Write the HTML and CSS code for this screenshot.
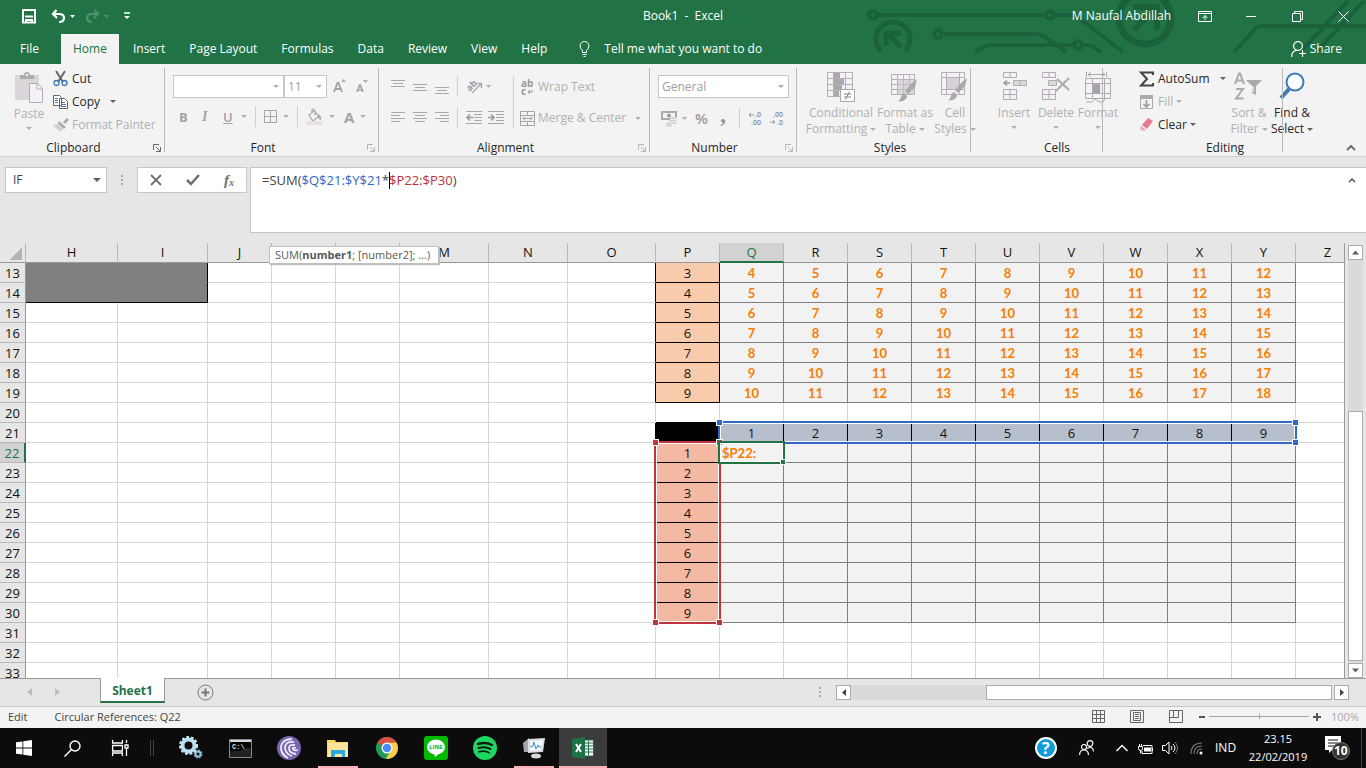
FILE: index.html
```html
<!DOCTYPE html>
<html lang="en">
<head>
<meta charset="utf-8">
<title>Book1 - Excel</title>
<link rel="stylesheet" href="styles.css">
</head>
<body>
<svg class="defs" aria-hidden="true">
  <symbol id="launch" viewBox="0 0 8 8"><path d="M.5 6V.5H6M3 3l4 4M7.500 3v4.500H3" fill="none" stroke="currentColor"/></symbol>
  <symbol id="brush" viewBox="0 0 20 24"><path d="M19 0l-2 8-7 7-3-3 7-8z" fill="#a9a9a9"/><path d="M6 14l3 3c0 4-5 6-9 5 4-2 2-6 6-8z" fill="#a9a9a9"/></symbol>
</svg>
<header class="top">
  <svg class="circuit" viewBox="0 0 526 64" fill="none" stroke="#1b613b" stroke-width="4" aria-hidden="true">
    <path d="M38 15h167M215 15h20l48 37M103 34h93q4 0 7 2l23 16M135 52l8-5q4-2 8-2h82M243 45h5q4 0 7 3l6 4M394 52l22-24q3-2 6-2h104M462 50l46-49M478 50l46-49"/>
    <circle cx="33" cy="15" r="4"/><circle cx="210" cy="15" r="4"/><circle cx="98" cy="34" r="4"/><circle cx="238" cy="45" r="4"/>
    <path d="M41 51a17 17 0 1 1 24 0" stroke-width="5"/><path d="M61 47L47 33M46 46V33h15" stroke-width="5"/>
    <circle cx="305" cy="18" r="26" stroke-width="7"/><path d="M294 30l20-20M293 7h24v23" stroke-width="6"/>
  </svg>
  <div class="titlebar">
    <div class="quick">
      <button aria-label="Save"><svg width="14" height="15" fill="none" stroke="#fff" stroke-width="2"><path d="M1 1h12v12.500H1zM3 7.500h8M4 14v-3h6v3"/></svg></button>
      <button class="undo" aria-label="Undo"><svg width="24" height="15" fill="none" stroke="#fff" stroke-width="2.200"><path d="M5.500 1L2 5l4 4M2 5h6q5 0 5 4t-5 4"/><path d="M19 6h5l-2.500 3z" fill="#fff" stroke="none"/></svg></button>
      <button class="redo" aria-label="Redo"><svg width="24" height="15" fill="none" stroke="#4f9070" stroke-width="2.200"><path d="M9.500 1L13 5 9 9M13 5H7Q2 5 2 9t5 4"/><path d="M19 6h5l-2.500 3z" fill="#4f9070" stroke="none"/></svg></button>
      <button class="custom" aria-label="Customize"><svg width="6" height="8"><path d="M0 1h6" stroke="#fff" stroke-width="1.500"/><path d="M0 4h6L3 7z" fill="#fff"/></svg></button>
    </div>
    <h1>Book1 &nbsp;-&nbsp; Excel</h1>
    <div class="winctl">
      <span class="user">M Naufal Abdillah</span>
      <button aria-label="Ribbon options"><svg width="14" height="11" fill="none" stroke="#fff"><path d="M.5.5h13v10H.5zM.5 2.500h13M7 9V4.500M4.500 7L7 4.500 9.500 7"/></svg></button>
      <button aria-label="Minimize"><svg width="10" height="11"><path d="M0 5.500h10" stroke="#fff"/></svg></button>
      <button aria-label="Restore"><svg width="11" height="11" fill="none" stroke="#fff"><path d="M.5 2.500h8v8h-8zM2.500 2.500v-2h8v8h-2"/></svg></button>
      <button aria-label="Close"><svg width="11" height="11"><path d="M.5.500l10 10M10.500.500l-10 10" stroke="#fff"/></svg></button>
    </div>
  </div>
  <nav class="tabs">
    <button class="file">File</button><button class="on">Home</button><button>Insert</button><button>Page Layout</button><button>Formulas</button><button>Data</button><button>Review</button><button>View</button><button>Help</button>
    <button class="tell"><svg width="11" height="16" fill="none" stroke="#fff"><path d="M3.500 11.500v-2Q1 7.500 1 5a4.500 4.500 0 0 1 9 0q0 2.500-2.500 4.500v2zM3.500 13.500h4M4.500 15.500h2"/></svg>Tell me what you want to do</button>
    <button class="share"><svg width="15" height="16" fill="none" stroke="#fff" stroke-width="1.200"><circle cx="7" cy="5" r="4.400"/><path d="M.6 16q0-6 5-6.600M8 12.500h7M11.500 9v7"/></svg>Share</button>
  </nav>
</header>

<section class="ribbon">
  <div class="group clip">
    <div class="body">
      <button class="big off"><svg width="28" height="32"><rect x="0" y="3" width="24" height="25" rx="1" fill="#d9d5d9"/><path d="M5 3h4q0-3 3-3t3 3h4v4H5z" fill="#adabad"/><circle cx="12" cy="3" r="1.200" fill="#f3f3f3"/><path d="M14.500 11.500h8l5 5v14h-13z" fill="#f6f1f8" stroke="#b0aeb0"/><path d="M22 12v5h5" fill="none" stroke="#b0aeb0"/></svg><span>Paste</span><i class="ar"></i></button>
      <div class="stack">
        <button><svg width="16" height="16" fill="none"><path d="M3 0l7 11M12 0L5 11" stroke="#666" stroke-width="2"/><circle cx="3.500" cy="12" r="2.500" stroke="#3d7ab5" stroke-width="1.300"/><circle cx="11.500" cy="12" r="2.500" stroke="#3d7ab5" stroke-width="1.300"/></svg>Cut</button>
        <button><svg width="16" height="16"><path d="M.5 1.500h6l2 2v8h-8zM6.500 4.500h5l3 3v7h-8z" fill="#fff" stroke="#666"/><path d="M2 4.500h3M2 6.500h3M2 8.500h3M8 8.500h4M8 10.500h5M8 12.500h5" stroke="#3d7ab5"/></svg>Copy<i class="ar dark far"></i></button>
        <button class="off"><svg width="16" height="16"><path d="M0 8l6-2 5 5-4 4z" fill="#d5d1d5"/><path d="M6 4l7 6-2 2-6-6zM10 5l4-4 2 2-4 4z" fill="#aaa"/></svg>Format Painter</button>
      </div>
    </div>
    <footer>Clipboard<button aria-label="Clipboard settings" class="dark"><svg width="8" height="8"><use href="#launch"/></svg></button></footer>
  </div>
  <div class="group font">
    <div class="body rows">
      <div class="row"><div class="combo cname"><select aria-label="Font"><option></option></select><i class="ar"></i></div><div class="combo csize"><select aria-label="Font size"><option>11</option></select><i class="ar"></i></div>
        <button class="ga" aria-label="Increase font"><svg width="13" height="15"><path d="M1 13L4.500 4h1L9 13M2.500 10h5" fill="none" stroke="#a3a3a3" stroke-width="1.800"/><path d="M8 3h5l-2.500-3z" fill="#aaa"/></svg></button><button class="gb" aria-label="Decrease font"><svg width="12" height="15"><path d="M1 13l2.700-7h.6L7 13M2 11h4" fill="none" stroke="#a3a3a3" stroke-width="1.700"/><path d="M7 1h5L9.500 4z" fill="#aaa"/></svg></button></div>
      <div class="row fmt"><button class="b">B</button><button class="i">I</button><button class="u">U</button><i class="ar"></i><hr>
        <button aria-label="Borders"><svg width="13" height="13" fill="none" stroke="#aaa5aa"><path d="M.5.500h12v12H.5zM6.500.500v12M.5 6.500h12"/></svg></button><i class="ar"></i><hr>
        <button aria-label="Fill color"><svg width="17" height="16"><path d="M3 6l5-4 5 5-6 5zM6 4V1q2-2 3 1v4" fill="none" stroke="#aaa" stroke-width="1.200"/><path d="M12 5q4 2 3 6-3 0-3-6z" fill="#aaa"/><path d="M0 12h16v4H0z" fill="#e6dfe2"/></svg></button><i class="ar"></i><button class="fa">A</button><i class="ar"></i></div>
    </div>
    <footer>Font<button aria-label="Font settings"><svg width="8" height="8"><use href="#launch"/></svg></button></footer>
  </div>
  <div class="group align">
    <div class="body">
      <div class="agrid">
        <button aria-label="Top"><svg width="14" height="15"><path d="M0 1.500h14M2 4.500h10M0 7.500h14" stroke="#a8a8a8"/></svg></button>
        <button aria-label="Middle"><svg width="14" height="15"><path d="M0 5.500h14M2 8.500h10M0 11.500h14" stroke="#a8a8a8"/></svg></button>
        <button aria-label="Bottom"><svg width="14" height="17"><path d="M0 9.500h14M2 12.500h10M0 15.500h14" stroke="#a8a8a8"/></svg></button>
        <hr>
        <button class="ori" aria-label="Orientation"><svg width="26" height="17"><g transform="rotate(-45 8 8)"><text x="1" y="9" class="ab">ab</text></g><path d="M6 15l9-9M11 5.500h4.500V10" fill="none" stroke="#a8a8a8" stroke-width="1.300"/><path d="M20 7h5l-2.500 3z" fill="#b0b0b0"/></svg></button>
        <button aria-label="Left"><svg width="14" height="12"><path d="M0 .5h14M0 3.500h9M0 6.500h14M0 9.500h9" stroke="#a8a8a8"/></svg></button>
        <button aria-label="Center"><svg width="14" height="12"><path d="M0 .5h14M2 3.500h10M0 6.500h14M2 9.500h10" stroke="#a8a8a8"/></svg></button>
        <button aria-label="Right"><svg width="14" height="12"><path d="M0 .5h14M5 3.500h9M0 6.500h14M5 9.500h9" stroke="#a8a8a8"/></svg></button>
        <hr>
        <span class="ind"><button aria-label="Decrease indent"><svg width="16" height="13"><path d="M0 .5h16M8 3.500h8M8 6.500h8M8 9.500h8M0 12.500h16" stroke="#a8a8a8"/><path d="M1 6.500h6M4 3.500l-3 3 3 3" fill="none" stroke="#999" stroke-width="1.600"/></svg></button><button aria-label="Increase indent"><svg width="16" height="13"><path d="M0 .5h16M8 3.500h8M8 6.500h8M8 9.500h8M0 12.500h16" stroke="#a8a8a8"/><path d="M0 6.500h6M3 3.500l3 3-3 3" fill="none" stroke="#999" stroke-width="1.600"/></svg></button></span>
      </div>
      <div class="wrapcol off">
        <button><svg width="15" height="17"><text x="1" y="8" class="ab ab2">ab</text><text x="1" y="16" class="ab ab2">c</text><path d="M8 13h4v-2M10 11l-2 2 2 2" fill="none" stroke="#999"/></svg>Wrap Text</button>
        <button><svg width="15" height="15" fill="none" stroke="#a8a2a8"><path d="M.5.500h14v14H.5zM.5 4.500h14M.5 10.500h14M7.500.500v4M7.500 10.500v4M3 7.500h9M5 5.500l-2 2 2 2M10 5.500l2 2-2 2"/></svg>Merge &amp; Center<i class="ar far"></i></button>
      </div>
    </div>
    <footer>Alignment<button aria-label="Alignment settings"><svg width="8" height="8"><use href="#launch"/></svg></button></footer>
  </div>
  <div class="group num">
    <div class="body rows">
      <div class="row"><div class="combo cnum"><select aria-label="Number format"><option>General</option></select><i class="ar"></i></div></div>
      <div class="row nrow"><button aria-label="Accounting"><svg width="26" height="17"><path d="M1 2h14v7H1z" fill="none" stroke="#aaa" stroke-width="2"/><circle cx="8" cy="5.500" r="2" fill="#999"/><path d="M9 7h7v4H9z" fill="#f3f3f3"/><path d="M9 8h7M8 10.500h7M10 13h6M5 13.500h5M5 15.500h6" stroke="#d4c9d0" stroke-width="1.500"/><path d="M21 7h5l-2.500 3z" fill="#b0b0b0"/></svg></button><button class="pct">%</button><button class="comma">,</button><hr>
      <button aria-label="Increase decimal"><svg width="15" height="15"><text x="7" y="6" class="dec">.0</text><text x="3" y="14" class="dec">.00</text><path d="M1 4h5M3 2L1 4l2 2" fill="none" stroke="#999"/></svg></button><button aria-label="Decrease decimal"><svg width="15" height="15"><text x="3" y="6" class="dec">.00</text><text x="7" y="14" class="dec">.0</text><path d="M0 11h5M3 9l2 2-2 2" fill="none" stroke="#999"/></svg></button></div>
    </div>
    <footer>Number<button aria-label="Number settings"><svg width="8" height="8"><use href="#launch"/></svg></button></footer>
  </div>
  <div class="group styles">
    <div class="body bigs off">
      <button class="big"><svg width="28" height="31"><path d="M.5.500h25v24H.5zM.5 6.500h25M.5 12.500h25M.5 18.500h25M6.500.500v24M18.500.500v24" fill="#f6f1f8" stroke="#b5b0b5"/><path d="M7 1h6v5H7zM7 7h10v5H7zM7 13h8v5H7zM7 19h5v5H7z" fill="#aaa"/><path d="M13.500 17.500h14v12h-14z" fill="#fff" stroke="#aaa"/><path d="M17 22h7M17 25h7M22.500 19.500l-4 8" stroke="#888"/></svg><span>Conditional<br>Formatting<i class="ar"></i></span></button>
      <button class="big"><svg width="28" height="31"><path d="M.5 2.500h23v20H.5zM.5 7.500h23M.5 12.500h23M.5 17.500h23M6.500 2.500v20M12.500 2.500v20M18.500 2.500v20" fill="#f6f1f8" stroke="#b5b0b5"/><path d="M7 8h16v14H7z" fill="#c8c4c8" opacity=".6"/><svg x="7" y="7" width="20" height="24"><use href="#brush"/></svg></svg><span>Format as<br>Table<i class="ar"></i></span></button>
      <button class="big"><svg width="28" height="31"><path d="M.5.500h23v22H.5zM.5 5.500h23M.5 17.500h23M5.500.500v22M18.500.500v22" fill="#f6f1f8" stroke="#b5b0b5"/><path d="M6 6h12v11H6z" fill="#d6d2d6"/><svg x="7" y="6" width="20" height="24"><use href="#brush"/></svg></svg><span>Cell<br>Styles<i class="ar"></i></span></button>
    </div>
    <footer>Styles</footer>
  </div>
  <div class="group cells">
    <div class="body bigs off">
      <button class="big"><svg width="28" height="31" fill="#f6f1f8" stroke="#b0abb0"><path d="M3.500.500h13v5h-13zM10 .5v5M3.500 17.500h13v10h-13zM10 17.500v10M3.500 22.500h13"/><path d="M13.500 8.500h13v5h-13zM20 8.500v5" fill="#dcd8dc"/><path d="M4 11h6M7 8.500L4 11l3 2.500" fill="none" stroke="#999" stroke-width="1.500"/></svg><span>Insert</span><i class="ar"></i></button>
      <button class="big"><svg width="28" height="31" fill="#f6f1f8" stroke="#b0abb0"><path d="M.5.500h13v5H.5zM7 .5v5M.5 17.500h13v10H.5zM7 17.500v10M.5 22.500h13"/><path d="M6.500 8.500h8v5h-8z" fill="#dcd8dc"/><path d="M15 7l12 11M27 6L14 19" stroke="#aaa" stroke-width="2"/></svg><span>Delete</span><i class="ar"></i></button>
      <button class="big"><svg width="28" height="31" fill="none" stroke="#b0abb0"><path d="M1.500 6.500h25v20h-25zM1.500 11.500h25M1.500 21.500h25M8.500 6.500v20M20.500 6.500v20" fill="#f6f1f8"/><path d="M9 12h7v9H9z" fill="#a5a5a5" stroke="none"/><path d="M2.500 0v5M22.500 0v5M4 2.500h17M7 .5l-3 2 3 2M18 .5l3 2-3 2M2 30h6l3-3 4 3h4l2-3" stroke="#aaa"/></svg><span>Format</span><i class="ar"></i></button>
    </div>
    <footer>Cells</footer>
  </div>
  <div class="group edit">
    <div class="body">
      <div class="stack">
        <button><svg width="16" height="16"><path d="M14 4V1.500H2l6 6.500-6 6.500h12V12" fill="none" stroke="#444" stroke-width="2"/></svg>AutoSum<i class="ar dark far"></i></button>
        <button class="off"><svg width="16" height="16"><path d="M1.500 1.500h12v13h-12z" fill="#f6f1f8" stroke="#aaa"/><path d="M1 1h13v4H1z" fill="#aaa"/><path d="M7.500 6v7M4.500 10l3 3 3-3" fill="none" stroke="#999" stroke-width="1.500"/></svg>Fill<i class="ar"></i></button>
        <button><svg width="16" height="16"><path d="M9 1l5 3-6 8-5-4z" fill="#e8798c"/><path d="M2 9l5 4-3 1-3-2z" fill="#f0a5b1"/></svg>Clear<i class="ar dark"></i></button>
      </div>
      <button class="big sort off"><svg width="30" height="31"><path d="M1 12L5 1.500h1L10 12M2.500 8.500h6M2 17h7L2 26.500h7.500" fill="none" stroke="#aaa" stroke-width="2"/><path d="M12 8h16l-6 6v9l-4-2v-7z" fill="#aaa"/><path d="M18.500 14l1 6" stroke="#eee" stroke-width="1.500"/></svg><span>Sort &amp;<br>Filter<i class="ar"></i></span></button>
      <button class="big find"><svg width="28" height="31" fill="none" stroke="#3d7ab9"><circle cx="17" cy="10" r="8.500" fill="#fff" stroke-width="2"/><path d="M11 17L3 26" stroke-width="4"/></svg><span>Find &amp;<br>Select<i class="ar dark"></i></span></button>
    </div>
    <footer>Editing</footer>
  </div>
  <button class="collapse" aria-label="Collapse ribbon"><svg width="8" height="6"><path d="M0 5l4-4 4 4" fill="none" stroke="#666" stroke-width="1.800"/></svg></button>
</section>

<section class="fbar">
  <div class="namebox"><input aria-label="Name box" value="IF"><i class="ar dark"></i></div>
  <i class="dots"></i>
  <div class="fbtns">
    <button aria-label="Cancel"><svg width="12" height="12"><path d="M1 1l10 10M11 1L1 11" stroke="#707070" stroke-width="1.800"/></svg></button>
    <button aria-label="Enter"><svg width="14" height="12"><path d="M1 6l4 4 8-9" fill="none" stroke="#707070" stroke-width="2.500"/></svg></button>
    <button class="fx" aria-label="Insert function">f<small>x</small></button>
  </div>
  <div class="formula"><div role="textbox" aria-label="Formula" class="ftext">=SUM(<span class="fb">$Q$21:$Y$21</span>*<i class="caret"></i><span class="fr">$P22:$P30</span>)</div><svg width="8" height="6"><path d="M1 5l3-3 3 3" fill="none" stroke="#555" stroke-width="1.500"/></svg></div>
</section>

<main class="sheet">
  <div class="grid">
    <table id="cells"><colgroup id="cols"></colgroup><thead id="head"></thead><tbody id="rows"></tbody></table>
    <div class="range blue"><b></b><b></b><b></b><b></b></div>
    <div class="range red"><b></b><b></b><b></b><b></b></div>
    <div class="range green"><b></b></div>
    <div class="tip">SUM(<strong>number1</strong>; [number2]; ...)</div>
  </div>
  <div class="vscroll"><button aria-label="Up"><svg width="7" height="5"><path d="M0 4.500h7L3.500.500z" fill="#606060"/></svg></button><div class="vtrack"><div class="vthumb"></div></div><button aria-label="Down"><svg width="7" height="5"><path d="M0 .5h7l-3.500 4z" fill="#606060"/></svg></button></div>
</main>

<div class="sheetbar">
  <button class="nav" aria-label="Previous sheet"><svg width="5" height="8"><path d="M5 0v8L0 4z" fill="#bdbdbd"/></svg></button>
  <button class="nav" aria-label="Next sheet"><svg width="5" height="8"><path d="M0 0v8l5-4z" fill="#bdbdbd"/></svg></button>
  <button class="stab">Sheet1</button>
  <button class="add" aria-label="New sheet"><svg width="17" height="17" fill="none" stroke="#777"><circle cx="8.500" cy="8.500" r="7.500"/><path d="M8.500 4.500v8M4.500 8.500h8" stroke-width="2"/></svg></button>
  <div class="hscroll"><i class="dots"></i><button aria-label="Left"><svg width="4" height="7"><path d="M4 0v7L0 3.500z" fill="#444"/></svg></button><div class="htrack"><div class="hthumb"></div></div><button aria-label="Right"><svg width="4" height="7"><path d="M0 0v7l4-3.500z" fill="#444"/></svg></button></div>
</div>

<footer class="status">
  <span>Edit</span><span class="circ">Circular References: Q22</span>
  <div class="views">
    <button aria-label="Normal"><svg width="13" height="13" fill="none" stroke="#666"><path d="M.5.500h12v12H.5zM4.500.500v12M8.500.500v12M.5 4.500h12M.5 8.500h12"/></svg></button>
    <button aria-label="Page layout"><svg width="14" height="13" fill="none" stroke="#666"><path d="M.5.500h13v12H.5zM3.500 2.500h7v8h-7zM5 4.500h4M5 6.500h4M5 8.500h4"/></svg></button>
    <button aria-label="Page break"><svg width="14" height="13" fill="none" stroke="#666"><path d="M.5.500h13v12H.5zM.5 7.500h9v-7M4.500.500v7"/></svg></button>
    <button class="zm" aria-label="Zoom out"><svg width="6" height="8"><path d="M0 4h6" stroke="#555" stroke-width="2"/></svg></button>
    <span class="zline"></span>
    <button class="zp" aria-label="Zoom in"><svg width="8" height="8"><path d="M0 4h8M4 0v8" stroke="#555" stroke-width="2"/></svg></button>
    <span class="pc">100%</span>
  </div>
</footer>

<nav class="taskbar">
  <button aria-label="Start"><svg width="16" height="16" fill="#fff"><path d="M0 2.300L6.500 1.400v6.200H0zM7.300 1.300L16 0v7.600H7.300zM0 8.400h6.500v6.200L0 13.700zM7.300 8.400H16V16l-8.700-1.200z"/></svg></button>
  <button aria-label="Search"><svg width="17" height="17" fill="none" stroke="#fff" stroke-width="1.400"><circle cx="11" cy="6" r="5"/><path d="M7.500 9.500L.5 16.500"/></svg></button>
  <button aria-label="Task view"><svg width="17" height="16" fill="none" stroke="#fff" stroke-width="1.300"><path d="M.6 0v3h9.800V0M.6 5.500h9.800v5.500H.6zM.6 16v-3h9.800v3M14.500 0v3M14.500 8.500V16M13 5h3v3h-3z"/></svg></button>
  <i class="tsep"></i>
  <button aria-label="Settings"><svg width="24" height="24"><circle cx="9.500" cy="9.500" r="6" fill="none" stroke="#b9dff2" stroke-width="4"/><circle cx="9.500" cy="9.500" r="8.500" fill="none" stroke="#d5edf8" stroke-width="2" stroke-dasharray="2.700 2"/><circle cx="19" cy="18" r="2.500" fill="none" stroke="#8fc3e2" stroke-width="2"/><circle cx="19" cy="18" r="4" fill="none" stroke="#b9dff2" stroke-dasharray="1.800 1.300"/></svg></button>
  <button aria-label="Command prompt"><svg width="23" height="19"><path d="M.5.500h22v18H.5z" fill="#050505" stroke="#888"/><path d="M1 1h21v2H1z" fill="#d3d9df"/><text x="3" y="10" class="cmd">C:\_</text><path d="M1 12q10 1 21-4v10H1z" fill="#333" opacity=".6"/></svg></button>
  <button aria-label="BitTorrent"><svg width="24" height="24" fill="none" stroke="#efeafb" stroke-width="1.800"><circle cx="12" cy="12" r="12" fill="#7966b0" stroke="none"/><path d="M15 3Q6 3 4 10q-1 8 7 12M17 6q-8-1-9 5 0 7 7 9M18 9q-6-1-6 3 0 5 7 6M19 12q-4-1-3 1 1 2 5 1"/></svg></button>
  <button class="run" aria-label="Explorer"><svg width="22" height="19"><path d="M0 1h8l1 2h12v15H0z" fill="#ffd95e"/><path d="M1 4h20v14H1z" fill="#ffe69a"/><path d="M4 18v-7h14v7h-3v-3H8v3z" fill="#2ba9e0"/></svg></button>
  <button aria-label="Chrome"><svg width="22" height="22"><circle cx="11" cy="11" r="11" fill="#1f9d58"/><path d="M1.500 5.500A11 11 0 0 1 20.500 5.500L11 11z" fill="#dd4f43"/><path d="M20.500 5.500A11 11 0 0 1 11 22l-1-1 5-7-4-8z" fill="#ffcd41"/><circle cx="11" cy="11" r="5.500" fill="#fff"/><circle cx="11" cy="11" r="4.300" fill="#4a8af4"/></svg></button>
  <button aria-label="LINE"><svg width="24" height="24"><rect width="24" height="24" rx="3" fill="#00b900"/><ellipse cx="12" cy="11" rx="9" ry="7.500" fill="#fff"/><path d="M10 17l6 0-5 4z" fill="#fff"/><text x="5" y="13" class="line">LINE</text></svg></button>
  <button aria-label="Spotify"><svg width="24" height="24" fill="none" stroke="#0c1b10" stroke-linecap="round"><circle cx="12" cy="12" r="12" fill="#1ed760" stroke="none"/><path d="M5 8q8-2.500 14 1" stroke-width="2.400"/><path d="M5.500 12q7-2 12 1" stroke-width="2"/><path d="M6 15.700q6-1.500 10 1" stroke-width="1.700"/></svg></button>
  <button class="run" aria-label="Monitor"><svg width="24" height="22"><path d="M1 6l6-5v14H2z" fill="#a3a6aa"/><path d="M6 2l17-1-2 14-15 1z" fill="#ddd"/><path d="M8 4l13-1-2 10-11 1z" fill="#f4fbff"/><path d="M8 10l3-1 1-4 2 7 2-4 1 2h2" fill="none" stroke="#3b8fc4"/><ellipse cx="14" cy="19" rx="5" ry="2.500" fill="#d8d8d8"/></svg></button>
  <button class="run act" aria-label="Excel"><svg width="22" height="22"><path d="M12 3h9.500v16H12z" fill="#fff" stroke="#1e7145"/><path d="M12 6h9M12 9h9M12 12h9M12 15h9M16.500 4v14" stroke="#1e7145"/><path d="M0 2l13-2v22L0 20z" fill="#1e7145"/><path d="M4 7l5 8M9 7l-5 8" stroke="#fff" stroke-width="2"/></svg></button>
  <div class="tray">
    <button aria-label="Help"><svg width="22" height="22"><circle cx="11" cy="11" r="10" fill="#119bdc" stroke="#fff" stroke-width="2"/><text x="7" y="17" class="q">?</text></svg></button>
    <button class="people" aria-label="People"><svg width="15" height="16" fill="none" stroke="#fff" stroke-width="1.200"><circle cx="5" cy="7" r="2.500"/><circle cx="11" cy="3.500" r="2.800"/><path d="M.6 15q0-5 4.400-5t4.500 5M8 8.500q6-3 6.500 3"/></svg></button>
    <button class="chev" aria-label="Hidden icons"><svg width="12" height="8"><path d="M.5 7L6 1.500 11.500 7" fill="none" stroke="#fff" stroke-width="1.400"/></svg></button>
    <button class="batt" aria-label="Battery"><svg width="16" height="11" fill="none" stroke="#fff"><path d="M5 2.500h9v8H4V8M14.500 5v3M.5 3.500h4v2q0 2-2 2t-2-2zM1.500 1v2M3.500 1v2M2.500 7.500v3"/><path d="M6 4.500h7v4H6z" fill="#fff" stroke="none"/></svg></button>
    <button class="vol" aria-label="Volume"><svg width="17" height="14" fill="none" stroke="#fff"><path d="M.5 4.500h3L7 1v12L3.500 9.500h-3zM9 5q2 2 0 4M11 3q4 4 0 8"/><path d="M13 1q5 6 0 12" stroke="#777"/></svg></button>
    <button class="wifi" aria-label="Network"><svg width="13" height="13" fill="none" stroke="#777" stroke-width="1.200"><path d="M1 12Q1 1 12 1M4 12q0-8 8-8M7 12q0-5 5-5"/><circle cx="11" cy="11" r="1.500" fill="#fff" stroke="none"/></svg></button>
    <span class="lang">IND</span>
    <time>23.15<br>22/02/2019</time>
    <button class="note" aria-label="10 notifications"><svg width="25" height="24"><path d="M0 0h16v14H7l-3 3v-3H0z" fill="#fff"/><path d="M3 4h10M3 7h10M3 10h6" stroke="#111"/><circle cx="16" cy="15" r="8.500" fill="#333" stroke="#777"/><text x="9" y="19" class="n10">10</text></svg></button>
  </div>
</nav>
<script src="sheet.js"></script>
</body>
</html>
```
FILE: styles.css
```css
* { box-sizing: border-box; }
body { margin: 0; height: 100vh; display: flex; flex-direction: column; overflow: hidden; background: #e6e6e6; color: #262626; font: 12px/16px "Open Sans", "Noto Sans", sans-serif; }
button { border: 0; padding: 0; margin: 0; background: none; font: inherit; color: inherit; display: flex; align-items: center; white-space: nowrap; }
svg { display: block; flex: none; overflow: visible; }
.defs { position: absolute; width: 0; height: 0; }
hr { width: 1px; height: 21px; margin: 0; border: 0; background: #cfcfcf; }
.ar { flex: none; display: inline-block; width: 0; height: 0; border: 3px solid transparent; border-top-color: #b0b0b0; border-bottom: 0; }
.ar.dark { border-top-color: #606060; }
.off { color: #b0b0b0; }

.top { position: relative; flex: none; background: #217346; color: #fff; }
.circuit { position: absolute; right: 0; top: 0; width: 526px; height: 64px; overflow: hidden; }
.titlebar { position: relative; height: 34px; padding-bottom: 2px; display: grid; grid-template-columns: 1fr auto 1fr; align-items: center; }
.titlebar h1 { margin: 0; font-size: 12px; font-weight: 400; }
.quick { display: flex; align-items: center; padding-left: 22px; }
.undo { margin-left: 15px; }
.redo { margin-left: 10px; }
.custom { margin-left: 15px; }
.winctl { display: flex; justify-content: flex-end; align-items: center; }
.winctl button { width: 46px; justify-content: center; height: 30px; }
.user { margin-right: 11px; }
.tabs { position: relative; height: 30px; display: flex; }
.tabs button { padding: 0 12px; }
.tabs .file { padding: 0 22px 0 20px; }
.tabs .on { background: #f3f3f3; color: #217346; margin-right: 2px; }
.tabs .tell { gap: 14px; margin-left: 8px; }
.tabs .share { margin-left: auto; gap: 4px; padding: 0 24px 0 0; }

.ribbon { flex: none; display: flex; height: 93px; background: #f3f3f3; border-bottom: 1px solid #d0d0d0; }
.group { flex: none; position: relative; display: flex; flex-direction: column; padding: 4px 0 0; }
.group::after { content: ""; position: absolute; right: 0; top: 4px; bottom: 4px; width: 1px; background: #b8b8b8; }
.group .body { flex: 1; min-height: 0; display: flex; align-items: flex-start; }
.group footer { height: 16px; text-align: center; padding-right: 18px; position: relative; }
.group footer button { position: absolute; right: 4px; top: 4px; color: #b5b5b5; }
.group footer .dark { color: #666; }
.big { flex: none; flex-direction: column; text-align: center; gap: 2px; line-height: 16px; margin-top: 4px; }
.big > .ar { margin-top: 3px; }
.big span .ar { margin: 0 0 2px 3px; }
.stack { display: flex; flex-direction: column; }
.stack button { height: 23px; gap: 3px; }
.stack .far { margin-left: 7px; }
.body.rows { flex-direction: column; }
.row { display: flex; align-items: center; }
.row:first-child { margin: 7px 0 8px; }
.combo { display: flex; align-items: center; height: 23px; background: #fff; border: 1px solid #c6c6c6; padding-right: 4px; }
.combo select { flex: 1; min-width: 0; appearance: none; border: 0; background: none; font: inherit; color: #a0a0a0; padding: 0 0 0 3px; }

.clip { width: 165px; }
.clip .big { width: 36px; margin: 4px 6px 0 11px; }
.clip .stack { margin-top: -1px; }
.font { width: 214px; }
.font .row { padding-left: 8px; }
.cname { width: 111px; }
.csize { width: 43px; }
.ga { margin-left: 6px; }
.gb { margin-left: 10px; }
.font .fmt { padding-left: 14px; color: #a3a3a3; font-size: 13px; }
.fmt button { min-width: 10px; }
.fmt .b { font-weight: 700; margin-right: 13px; }
.fmt .i { font: italic 700 14px "Liberation Serif", serif; margin-right: 11px; }
.fmt .u { font-weight: 600; text-decoration: underline; margin-right: 2px; }
.fmt hr { margin: 0 8px; }
.fmt button + .ar { margin-left: 6px; }
.fmt .fa { font-size: 15px; font-weight: 700; margin-left: 9px; }
.align { width: 271px; }
.agrid { display: grid; grid-template-columns: 14px 14px 14px 1px 38px; column-gap: 8px; row-gap: 10px; align-items: center; padding: 8px 0 0 12px; }
.agrid button { height: 21px; }
.ind { display: flex; gap: 6px; }
.wrapcol { margin: 8px 0 0 9px; padding-left: 6px; border-left: 1px solid #cfcfcf; display: flex; flex-direction: column; gap: 9px; }
.wrapcol button { height: 22px; gap: 3px; }
.wrapcol .far { margin-left: 6px; }
.ab { font: 700 9px "Open Sans", sans-serif; fill: #999; stroke: none; }
.ab2 { font-size: 10px; }
.dec { font: 600 7px "Open Sans", sans-serif; fill: #8c8c8c; }
.num { width: 147px; }
.num .row { padding-left: 8px; }
.cnum { width: 131px; }
.num .nrow { padding-left: 11px; color: #999; }
.pct { font-size: 15px; font-weight: 600; margin-left: 8px; }
.comma { font: 700 24px/12px "Liberation Serif", serif; height: 16px; margin: 0 13px 8px 12px; }
.nrow hr { margin-right: 8px; }
.nrow hr + button { margin-right: 7px; }
.styles { width: 174px; }
.styles .body { padding-left: 12px; }
.styles .big:nth-child(1) { width: 64px; }
.styles .big:nth-child(2) { width: 56px; margin-left: 4px; }
.styles .big:nth-child(3) { width: 42px; margin-left: 1px; }
.group.styles footer, .group.cells footer { padding-right: 4px; }
.group.styles footer { padding-left: 16px; }
.cells { width: 132px; }
.cells .body { padding-left: 22px; }
.cells footer { padding-left: 44px; }
.group.cells footer { padding-left: 44px; }
.cells .big { width: 42px; }
.edit { width: 180px; }
.group.edit footer { padding: 0 0 0 64px; }
.edit .stack { padding-left: 36px; width: 122px; margin-top: -1px; }
.sort { width: 48px; }
.find { width: 38px; }
.collapse { margin: 0 11px 5px auto; align-self: flex-end; }

.fbar { flex: none; display: flex; align-items: flex-start; padding: 10px 0; height: 86px; }
.namebox { width: 102px; height: 26px; margin-left: 5px; background: #fff; border: 1px solid #c6c6c6; display: flex; align-items: center; padding-right: 5px; }
.fbar .ar { border-width: 4px 4px 0; }
.namebox input { border: 0; flex: 1; min-width: 0; background: none; font: inherit; color: #444; padding: 0 7px; }
.dots { width: 2px; height: 10px; margin: 8px 14px; background: repeating-linear-gradient(#aaa 0 2px, transparent 2px 4px); }
.fbtns { width: 110px; height: 26px; background: #fff; border: 1px solid #c6c6c6; display: flex; justify-content: space-around; }
.fx { font: italic 700 15px "Liberation Serif", serif; color: #707070; }
.fx small { font-size: 10px; padding-top: 4px; }
.formula { flex: 1; align-self: stretch; margin-left: 3px; background: #fff; border: 1px solid #c6c6c6; border-right: 0; padding: 4px 10px 0 11px; display: flex; justify-content: space-between; color: #444; }
.formula svg { margin: 5px 0 0 0; }
.ftext { white-space: nowrap; font-size: 13px; }
.fb { color: #3068c8; }
.fr { color: #c03038; }
.caret { display: inline-block; width: 1px; height: 17px; margin-right: -1px; background: #000; vertical-align: -4px; }

.sheet { flex: 1; min-height: 0; display: flex; border-bottom: 1px solid #999; }
.grid { position: relative; flex: 1; min-width: 0; overflow: hidden; border-right: 1px solid #999; background: #fff; }
table { table-layout: fixed; border-collapse: separate; border-spacing: 0; width: 1360px; font-size: 13px; color: #111; }
th, td { height: 20px; padding: 0; line-height: 19px; text-align: center; font-weight: 400; overflow: hidden; border: 0 solid #d4d4d4; border-width: 0 1px 1px 0; }
tbody th, tbody td { padding-top: 2px; line-height: 17px; }
th { background: #e6e6e6; border-color: #b8b8b8; }
thead th { border-bottom-color: #999; }
tbody th { border-right-color: #999; }
thead th:first-child { background: linear-gradient(135deg, transparent 50%, #b3b3b3 50%) 10px 5px / 12px 12px no-repeat #e6e6e6; }
th.cur { background: #d2d2d2; color: #217346; }
thead th.cur { border-bottom: 2px solid #217346; line-height: 18px; }
tbody th.cur { border-right: 2px solid #217346; }
td.grey { background: #808080; border-color: #808080; }
td.edge-r { border-right-color: #000; }
td.edge-b { border-bottom-color: #000; }
td.key { background: #f8cbad; border-color: #000; }
td.key.sel { background: #f4b9a2; }
td.val { background: #f2f2f2; border-color: #7f7f7f; color: #fa7d00; font-family: "Lato", sans-serif; font-weight: 700; }
td.hdr { background: #b8bfcc; border-color: #000; }
td.black { background: #000; border-color: #000; }
td.entry { text-align: left; padding-left: 2px; }
.range { position: absolute; border: 2px solid; box-shadow: inset 0 0 0 1px #fff; }
.range b { position: absolute; width: 7px; height: 7px; background: currentColor; border: 1px solid #fff; left: -4px; top: -4px; }
.range b:nth-child(2) { left: auto; right: -4px; }
.range b:nth-child(3) { top: auto; bottom: -4px; }
.range b:nth-child(4) { left: auto; right: -4px; top: auto; bottom: -4px; }
.blue { color: #3068c8; left: 718px; top: 178px; width: 579px; height: 23px; }
.red { color: #c4343c; left: 654px; top: 198px; width: 67px; height: 183px; }
.green { color: #217346; left: 718px; top: 198px; width: 67px; height: 23px; }
.green b:first-child { left: auto; top: auto; right: -3px; bottom: -3px; width: 6px; height: 6px; }
.tip { position: absolute; left: 269px; top: 3px; height: 18px; padding: 0 8px 0 5px; background: #fff; border: 1px solid #bfbfbf; box-shadow: 1px 1px 1px #bbb; font-size: 11px; line-height: 15px; color: #595959; }
.vscroll { width: 21px; padding: 2px 3px 0; display: flex; flex-direction: column; }
.vscroll button { height: 15px; justify-content: center; background: #fff; border: 1px solid #ababab; }
.vtrack { flex: 1; background: #dadada; display: flex; flex-direction: column; justify-content: flex-end; }
.vthumb { height: 62%; background: #fff; border: 1px solid #ababab; margin-bottom: 2px; }

.sheetbar { flex: none; height: 28px; display: flex; align-items: flex-start; border-bottom: 1px solid #c6c6c6; }
.nav { height: 25px; width: 28px; justify-content: center; }
.nav:first-child { margin-left: 15px; }
.stab { height: 25px; width: 65px; margin-left: 29px; margin-top: -1px; padding-top: 3px; background: #fff; border: 1px solid #999; border-top: 0; border-bottom: 2px solid #217346; color: #217346; font-weight: 700; justify-content: center; }
.add { height: 26px; margin-left: 32px; }
.hscroll { margin: 6px 17px 0 auto; width: 530px; display: flex; }
.hscroll .dots { margin: 2px 15px 0 0; }
.hscroll button { width: 15px; height: 15px; background: #fff; border: 1px solid #ababab; justify-content: center; }
.htrack { flex: 1; margin-right: 2px; background: #dadada; display: flex; justify-content: flex-end; }
.hthumb { width: 72%; height: 15px; background: #fff; border: 1px solid #ababab; }

.status { flex: none; height: 21px; padding: 0 8px 2px; background: #f3f3f3; display: flex; align-items: center; font-size: 11px; color: #444; }
.circ { margin-left: 27px; }
.views { margin-left: auto; display: flex; align-items: center; }
.views button + button { margin-left: 25px; }
.views .zm.zm { margin-left: 16px; }
.zline { width: 100px; height: 5px; margin: 0 4px; background: linear-gradient(#a5a5a5, #a5a5a5) 0 2px / 100% 1px no-repeat, linear-gradient(#a5a5a5, #a5a5a5) 50% 0 / 1px 5px no-repeat; }
.pc { width: 27px; margin-left: 10px; color: #aaa; }

.taskbar { flex: none; height: 40px; background: #0c0c0c; color: #fff; display: flex; }
.taskbar > button { width: 48px; justify-content: center; }
.tsep { width: 4px; height: 16px; margin: 12px 13px 0 6px; border: 1px solid #444; border-width: 0 1px; }
.tsep ~ button { margin-right: 1px; }
.taskbar .run { background: linear-gradient(#ffb0b8, #ffb0b8) 50% 100% / 40px 2px no-repeat; }
.taskbar .act { background: linear-gradient(#ffb0b8, #ffb0b8) 50% 100% / 48px 2px no-repeat #3c3c3c; }
.tray { margin-left: auto; display: flex; align-items: center; padding-right: 4px; }
.people { margin-left: 22px; }
.tray .chev { margin-left: 22px; }
.tray .batt { margin-left: 10px; }
.tray .vol { margin-left: 8px; }
.tray .wifi { margin-left: 11px; }
.lang { width: 20px; margin-left: 12px; }
.tray time { width: 60px; margin-left: 13px; text-align: center; font-size: 11px; line-height: 18px; white-space: nowrap; }
.tray .note { height: 40px; margin-left: 17px; padding-right: 11px; border-right: 1px solid #444; }
.cmd { font: 700 7px "Liberation Mono", monospace; fill: #ddd; }
.line { font: 700 6px "Open Sans", sans-serif; fill: #00b900; }
.q { font: 700 16px "Open Sans", sans-serif; fill: #fff; }
.n10 { font: 700 12px "Open Sans", sans-serif; fill: #fff; }
```
FILE: sheet.js
```js
const letters = "HIJKLMNOPQRSTUVWXYZ".split("");
const widths = { H: 92, I: 90, M: 89, N: 79, O: 88 };
const sums = "QRSTUVWXY";

document.getElementById("cols").innerHTML =
  '<col style="width:26px">' +
  letters.map(c => `<col style="width:${widths[c] || 64}px">`).join("");

document.getElementById("head").innerHTML =
  "<tr><th></th>" +
  letters.map(c => `<th scope="col"${c === "Q" ? ' class="cur"' : ""}>${c}</th>`).join("") +
  "</tr>";

function cell(col, row) {
  const i = sums.indexOf(col) + 1;
  if (row <= 14 && (col === "H" || col === "I")) {
    return ["grey" + (col === "I" ? " edge-r" : "") + (row === 14 ? " edge-b" : ""), ""];
  }
  if (col === "O" && (row <= 19 || row === 21)) return ["edge-r", ""];
  if (col === "P") {
    if (row <= 19) return ["key", row - 10];
    if (row === 20) return ["edge-b", ""];
    if (row === 21) return ["black", ""];
    if (row <= 30) return ["key sel", row - 21];
  }
  if (i > 0) {
    if (row <= 19) return ["val", row - 10 + i];
    if (row === 21) return ["hdr", i];
    if (row === 22 && col === "Q") return ["val entry", "$P22:"];
    if (row > 21 && row <= 30) return ["val", ""];
  }
  return ["", ""];
}

let html = "";
for (let row = 13; row <= 33; row++) {
  html += `<tr><th scope="row"${row === 22 ? ' class="cur"' : ""}>${row}</th>`;
  for (const col of letters) {
    const [name, text] = cell(col, row);
    html += `<td class="${name}">${text}</td>`;
  }
  html += "</tr>";
}
document.getElementById("rows").innerHTML = html;
```
